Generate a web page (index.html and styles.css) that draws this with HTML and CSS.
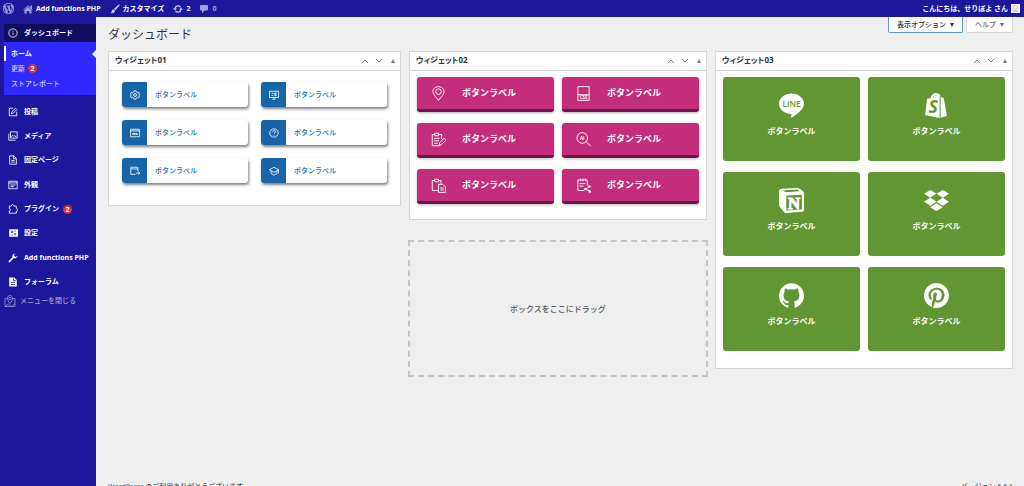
FILE: index.html
```html
<!DOCTYPE html>
<html lang="ja">
<head>
<meta charset="utf-8">
<title>ダッシュボード</title>
<link rel="stylesheet" href="styles.css">
</head>
<body>
<header class="topbar">
  <nav class="topbar-group">
    <a href="#" class="top-link" aria-label="WordPress"><svg class="ico ico-wp" viewBox="0 0 24 24"><path fill="currentColor" stroke="currentColor" stroke-width=".8" d="M21.469 6.825c.84 1.537 1.318 3.3 1.318 5.175 0 3.979-2.156 7.456-5.363 9.325l3.295-9.527c.615-1.54.82-2.771.82-3.864 0-.405-.026-.78-.07-1.11m-7.981.105c.647-.03 1.232-.105 1.232-.105.582-.075.514-.93-.067-.899 0 0-1.755.135-2.88.135-1.064 0-2.85-.15-2.85-.15-.585-.03-.661.855-.075.885 0 0 .54.061 1.125.09l1.68 4.605-2.37 7.08L5.354 6.9c.649-.03 1.234-.1 1.234-.1.585-.075.516-.93-.065-.896 0 0-1.746.138-2.874.138-.2 0-.438-.008-.69-.015C4.911 3.15 8.235 1.215 12 1.215c2.809 0 5.365 1.072 7.286 2.833-.046-.003-.091-.009-.141-.009-1.06 0-1.812.923-1.812 1.914 0 .89.513 1.643 1.06 2.531.411.72.89 1.643.89 2.977 0 .915-.354 1.994-.821 3.479l-1.075 3.585-3.9-11.61.001.014zM12 22.784c-1.059 0-2.081-.153-3.048-.437l3.237-9.406 3.315 9.087c.024.053.05.101.078.149-1.12.393-2.325.609-3.582.609M1.211 12c0-1.564.336-3.05.935-4.39L7.29 21.709C3.694 19.96 1.212 16.271 1.211 12M12 0C5.385 0 0 5.385 0 12s5.385 12 12 12 12-5.385 12-12S18.615 0 12 0"/></svg></a>
    <a href="#" class="top-link"><svg class="ico ico-dim" viewBox="0 0 20 20"><path fill="currentColor" d="M15 7V3h3v7l1.500 1.400-1 1.100L10 4.500l-8.500 8-1-1.100L10 2.300zM10 6l7 6.500V19h-4.500v-5h-5v5H3v-6.500z"/></svg><span>Add functions PHP</span></a>
    <a href="#" class="top-link"><svg class="ico" viewBox="0 0 20 20"><path fill="currentColor" d="M18.800 1c.8.800.3 1.700-.2 2.400L11 12.500 8 9.700l8.300-7.800c.8-.8 1.700-1.500 2.500-.9zM7 10.500l3 2.800c.2 3-3.500 6.200-9 5.200 2-1 2-2.500 2.500-4.500.5-2 2-3.300 3.500-3.500z"/></svg><span>カスタマイズ</span></a>
    <a href="#" class="top-link top-updates"><svg class="ico" viewBox="0 0 20 20"><path fill="none" stroke="currentColor" stroke-width="2.600" d="M4 9a6.200 6.200 0 0 1 11-3M16 11a6.200 6.200 0 0 1-11 3"/><path fill="currentColor" d="M0 8.500h8l-4 4.700zM12 11.500h8l-4-4.700z"/></svg><span>2</span></a>
    <a href="#" class="top-link top-comments"><svg class="ico" viewBox="0 0 20 20"><path fill="currentColor" d="M4 2h12q2 0 2 2v7q0 2-2 2h-5l-5 6v-6H4q-2 0-2-2V4q0-2 2-2z"/></svg><span>0</span></a>
  </nav>
  <a href="#" class="top-link">こんにちは、せりぽよ さん<svg class="avatar" viewBox="0 0 9 9"><path fill="#f3f1ef" d="M0 0h9v9H0z"/><circle cx="4.500" cy="3.500" r="1.800" fill="#fff" stroke="#aaa" stroke-width=".6"/><path d="M2 7.500q2.500-2 5 0" fill="none" stroke="#999" stroke-width=".7"/></svg></a>
</header>
<div class="shell">
  <aside class="sidebar">
    <nav>
      <a href="#" class="item item-current"><svg class="ico" viewBox="0 0 24 24"><g class="line"><circle cx="12" cy="12" r="10"/><path d="M12 11v6M12 6.500v2.500"/></g></svg>ダッシュボード</a>
      <div class="submenu">
        <a href="#" class="sub sub-current">ホーム</a>
        <a href="#" class="sub">更新<span class="badge">2</span></a>
        <a href="#" class="sub">ストアレポート</a>
      </div>
      <div class="group">
        <a href="#" class="item"><svg class="ico" viewBox="0 0 24 24"><path class="line" d="M13 3H3v18h18V11M8 16l1-4.500L18 3l3 3-8.500 9z"/></svg>投稿</a>
        <a href="#" class="item"><svg class="ico" viewBox="0 0 24 24"><path class="line" d="M6 2h16v15H6zM2 6v16h16M8 14l3-4 3 3 2-2 4 4"/></svg>メディア</a>
        <a href="#" class="item"><svg class="ico" viewBox="0 0 24 24"><path class="line" d="M4 2h10l6 6v14H4zM13 2v7h7M8 13h8M8 17h8"/></svg>固定ページ</a>
      </div>
      <div class="group">
        <a href="#" class="item"><svg class="ico" viewBox="0 0 24 24"><path class="line" d="M2 3h20v18H2zM2 7h20M6 12h12M6 16h8"/></svg>外観</a>
        <a href="#" class="item"><svg class="ico" viewBox="0 0 24 24"><path class="line" d="M3 5h5c0-5 6-5 6 0h6v6c5 0 5 6 0 6v5H3v-5c4 0 4-6 0-6z"/></svg>プラグイン<span class="badge">2</span></a>
        <a href="#" class="item"><svg class="ico" viewBox="0 0 24 24"><path fill="currentColor" d="M3 3h21v18H3z"/><path stroke="#1d189b" stroke-width="2" d="M10 6v5M7 10h6M10 15v3M17 6v3M14 14h6M17 14v4"/></svg>設定</a>
      </div>
      <div class="group">
        <a href="#" class="item"><svg class="ico" viewBox="0 0 20 20"><path fill="currentColor" d="M16.700 9.300c-1.500 1.500-3.600 1.600-5.200.9L4.500 18c-2 2.200-4.700-.5-2.700-2.600l7.300-7c-1-3 .4-6.400 4.500-7.200L12 5l3 3 4-1.800c.2 1-1 2-2.300 3.100z"/></svg>Add functions PHP</a>
        <a href="#" class="item"><svg class="ico" viewBox="0 0 24 24"><path fill="currentColor" d="M3 1h12l6 6v16H3z"/><path stroke="#1d189b" stroke-width="2" fill="none" d="M13 3v6h6M7 13h10M7 18h10"/></svg>フォーラム</a>
      </div>
      <button type="button" class="collapse"><svg class="ico-map" viewBox="0 0 24 24"><path class="thin" d="M7 7H2v16h20V7h-5M2 23l7-5 6 5 7-6M12 17C4 8 7 1 12 1s8 7 0 16z"/><circle class="thin" cx="12" cy="7" r="2.500"/></svg>メニューを閉じる</button>
    </nav>
  </aside>
  <main class="main">
    <div class="head">
      <h1>ダッシュボード</h1>
      <div class="tabs">
        <button type="button" class="tab tab-focus">表示オプション<i class="tri-down"></i></button>
        <button type="button" class="tab">ヘルプ<i class="tri-down"></i></button>
      </div>
    </div>
    <div class="columns">
      <section class="card">
        <div class="card-head"><h2>ウィジェット01</h2><div class="handles"><button type="button" aria-label="上へ"><svg viewBox="0 0 14 14"><path d="M4 9l3-3 3 3"/></svg></button><button type="button" aria-label="下へ"><svg viewBox="0 0 14 14"><path d="M4 5l3 3 3-3"/></svg></button><button type="button" aria-label="切り替え"><i class="tri-up"></i></button></div></div>
        <div class="grid grid-blue">
          <a href="#" class="blue"><span class="blue-ico"><svg viewBox="0 0 24 24"><path class="line" d="M9.500 2h5l.8 3 2.700 1.500 3-.8 2 4L21 12l2 2.300-2 4-3-.8-2.700 1.500-.8 3h-5l-.8-3L6 17.500l-3 .8-2-4L3 12 1 9.700l2-4 3 .8L8.700 5z"/><circle class="line" cx="12" cy="12" r="3.500"/></svg></span><span>ボタンラベル</span></a>
          <a href="#" class="blue"><span class="blue-ico"><svg viewBox="0 0 24 24"><path class="line" d="M1 3h22v15H1zM8 22h8M12 18v4M6 8h5M6 13h4M18 8h-4v5h4M16 6v9"/></svg></span><span>ボタンラベル</span></a>
          <a href="#" class="blue"><span class="blue-ico"><svg viewBox="0 0 24 24"><path class="line" d="M1 3h22v18H1zM1 7h22M7 12v5M11 12v5M14 17l2-4 2 4M6 14h12"/></svg></span><span>ボタンラベル</span></a>
          <a href="#" class="blue"><span class="blue-ico"><svg viewBox="0 0 24 24"><circle class="line" cx="12" cy="12" r="10"/><path class="line" d="M8.500 10c0-5 7-5 7-1 0 3-3.500 2.500-3.500 5.500M12 16.500v2"/></svg></span><span>ボタンラベル</span></a>
          <a href="#" class="blue"><span class="blue-ico"><svg viewBox="0 0 24 24"><path class="line" d="M13 20H2V3h17v9M2 7h17M14 17h9M20 13l3.500 4-3.500 4"/></svg></span><span>ボタンラベル</span></a>
          <a href="#" class="blue"><span class="blue-ico"><svg viewBox="0 0 24 24"><path class="line" d="M1 9l11-6 11 6-11 6zM5 12v6l7 4 7-4v-6M23 9v9"/></svg></span><span>ボタンラベル</span></a>
        </div>
      </section>
      <div class="stack">
        <section class="card">
          <div class="card-head"><h2>ウィジェット02</h2><div class="handles"><button type="button" aria-label="上へ"><svg viewBox="0 0 14 14"><path d="M4 9l3-3 3 3"/></svg></button><button type="button" aria-label="下へ"><svg viewBox="0 0 14 14"><path d="M4 5l3 3 3-3"/></svg></button><button type="button" aria-label="切り替え"><i class="tri-up"></i></button></div></div>
          <div class="grid grid-pink">
            <a href="#" class="pink"><svg viewBox="0 0 24 24"><path class="thin" d="M12 23C8 18 3 13 3 9a9 8 0 0 1 18 0c0 4-5 9-9 14z"/><circle class="thin" cx="12" cy="9" r="4.500"/></svg>ボタンラベル</a>
            <a href="#" class="pink"><svg viewBox="0 0 24 24"><path class="thin" d="M3 1h18v22H3zM3 14h18"/><text x="12" y="21.500" class="t-css">CSS</text></svg>ボタンラベル</a>
            <a href="#" class="pink"><svg viewBox="0 0 24 24"><path class="thin" d="M6 4H2v18h13M12 4h5v7M6 2h6v4H6zM5 10h9M5 14h8M5 18h6M13 21l1-4 7-7 3 3-7 7z"/></svg>ボタンラベル</a>
            <a href="#" class="pink"><svg viewBox="0 0 24 24"><circle class="thin" cx="10" cy="9.500" r="8.500"/><path class="thin" d="M16 15.500l8 7.500"/><text x="10" y="12.500" class="t-ai">AI</text></svg>ボタンラベル</a>
            <a href="#" class="pink"><svg viewBox="0 0 24 24"><path class="thin" d="M6 4H2v16h10M12 4h4v5M6 2h6v4H6zM12 10h7l4 4v9H12zM15 16h5M15 19h5"/></svg>ボタンラベル</a>
            <a href="#" class="pink"><svg viewBox="0 0 24 24"><path class="thin" d="M13 20H3V3h15v9M7 1v4M11 1v4M15 1v4M6 9h9M6 13h6M21 14l-6 4 7 3"/><circle cx="21.500" cy="13.500" r="2" fill="currentColor"/><circle cx="15" cy="17.500" r="2" fill="currentColor"/><circle cx="22" cy="21.500" r="2" fill="currentColor"/></svg>ボタンラベル</a>
          </div>
        </section>
        <div class="drop">ボックスをここにドラッグ</div>
      </div>
      <section class="card">
        <div class="card-head"><h2>ウィジェット03</h2><div class="handles"><button type="button" aria-label="上へ"><svg viewBox="0 0 14 14"><path d="M4 9l3-3 3 3"/></svg></button><button type="button" aria-label="下へ"><svg viewBox="0 0 14 14"><path d="M4 5l3 3 3-3"/></svg></button><button type="button" aria-label="切り替え"><i class="tri-up"></i></button></div></div>
        <div class="grid grid-green">
          <a href="#" class="green"><svg viewBox="0 0 24 24"><path fill="currentColor" d="M12 .500c6.600 0 12 4.400 12 9.700 0 4.700-4.500 8.300-11.500 13.300-.6.300-1-.1-.8-.8l.3-2.600C5.400 20.100 0 15.600 0 10.200S5.400.500 12 .500z"/><text x="12" y="13" class="t-line">LINE</text></svg>ボタンラベル</a>
          <a href="#" class="green"><svg viewBox="0 0 24 24"><path fill="currentColor" d="M3 5.500L15 3.500V24L1 21zM16 3.500l3 1.500 3 17-6 1.700z"/><path class="line" d="M7 5.500C8 1.500 11 0 12 1.500s1 3 1 3.500M10 5c1-4 4-5 5-1.500"/><text x="8.800" y="19" class="t-s">S</text></svg>ボタンラベル</a>
          <a href="#" class="green"><svg viewBox="0 0 24 24"><path fill="currentColor" d="M2 .800L17.500 0Q19 0 20 .700l3 2.300q1 .7 1 1.700v16.500q0 1.500-1.700 1.700L7 24q-1.500.1-2.300-1l-4-5Q0 17 0 16V3Q0 1 2 .800z"/><path fill="#629632" d="M3.500 2.300l14-.8 2.200 1.700L6.500 4zM7 7.300L22 6.400v14.200L7 21.500z"/><text x="14.500" y="19.700" class="t-n">N</text></svg>ボタンラベル</a>
          <a href="#" class="green"><svg viewBox="0 0 24 24"><path fill="currentColor" d="M6 1.807L0 5.629l6 3.822 6.001-3.822L6 1.807zM18 1.807l-6 3.822 6 3.822 6-3.822-6-3.822zM0 13.274l6 3.822 6.001-3.822L6 9.452l-6 3.822zM18 9.452l-6 3.822 6 3.822 6-3.822-6-3.822zM6 18.371l6.001 3.822 6-3.822-6-3.822L6 18.371z"/></svg>ボタンラベル</a>
          <a href="#" class="green"><svg viewBox="0 0 24 24"><path fill="currentColor" d="M12 .297c-6.630 0-12 5.373-12 12 0 5.303 3.438 9.800 8.205 11.385.6.113.82-.258.82-.577 0-.285-.01-1.040-.015-2.040-3.338.724-4.042-1.610-4.042-1.610C4.422 18.070 3.633 17.700 3.633 17.700c-1.087-.744.084-.729.084-.729 1.205.084 1.838 1.236 1.838 1.236 1.070 1.835 2.809 1.305 3.495.998.108-.776.417-1.305.76-1.605-2.665-.3-5.466-1.332-5.466-5.930 0-1.310.465-2.380 1.235-3.220-.135-.303-.54-1.523.105-3.176 0 0 1.005-.322 3.300 1.230.96-.267 1.980-.399 3-.405 1.020.006 2.040.138 3 .405 2.280-1.552 3.285-1.230 3.285-1.230.645 1.653.24 2.873.12 3.176.765.84 1.230 1.910 1.230 3.220 0 4.610-2.805 5.625-5.475 5.920.42.36.81 1.096.81 2.220 0 1.606-.015 2.896-.015 3.286 0 .315.21.69.825.57C20.565 22.092 24 17.592 24 12.297c0-6.627-5.373-12-12-12"/></svg>ボタンラベル</a>
          <a href="#" class="green"><svg viewBox="0 0 24 24"><path fill="currentColor" d="M12.017 0C5.396 0 .029 5.367.029 11.987c0 5.079 3.158 9.417 7.618 11.162-.105-.949-.199-2.403.041-3.439.219-.937 1.406-5.957 1.406-5.957s-.359-.72-.359-1.781c0-1.663.967-2.911 2.168-2.911 1.024 0 1.518.769 1.518 1.688 0 1.029-.653 2.567-.992 3.992-.285 1.193.6 2.165 1.775 2.165 2.128 0 3.768-2.245 3.768-5.487 0-2.861-2.063-4.869-5.008-4.869-3.410 0-5.409 2.562-5.409 5.199 0 1.033.394 2.143.889 2.741.099.12.112.225.085.345-.09.375-.293 1.199-.334 1.363-.053.225-.172.271-.401.165-1.495-.69-2.433-2.878-2.433-4.646 0-3.776 2.748-7.252 7.920-7.252 4.158 0 7.392 2.967 7.392 6.923 0 4.135-2.607 7.462-6.233 7.462-1.214 0-2.354-.629-2.758-1.379l-.749 2.848c-.269 1.045-1.004 2.352-1.498 3.146 1.123.345 2.306.535 3.550.535 6.607 0 11.985-5.365 11.985-11.987C23.970 5.390 18.592.026 11.985.026z"/></svg>ボタンラベル</a>
        </div>
      </section>
    </div>
    <footer class="foot"><span><a href="#">WordPress</a> のご利用ありがとうございます。</span><span>バージョン 6.6.1</span></footer>
  </main>
</div>
</body>
</html>
```
FILE: styles.css
```css
* { box-sizing: border-box; }
body {
  margin: 0;
  height: 100vh;
  overflow: hidden;
  background: #efefef;
  color: #2c3338;
  font: 500 7px/12px "Open Sans", "Noto Sans CJK JP", sans-serif;
}
a { color: inherit; text-decoration: none; }
button { font: inherit; color: inherit; border: 0; background: none; padding: 0; }
h1, h2 { margin: 0; }
svg { display: block; flex: none; }
.line { fill: none; stroke: currentColor; stroke-width: 2; stroke-linejoin: round; }
.thin { fill: none; stroke: currentColor; stroke-width: 1.5; stroke-linejoin: round; }
.ico { width: 10px; height: 10px; }

.topbar {
  display: flex;
  justify-content: space-between;
  height: 17px;
  padding: 0 4px 0 3px;
  background: #1d189b;
  color: #fff;
  font-weight: 700;
}
.topbar-group { display: flex; gap: 9px; }
.top-link { display: flex; align-items: center; gap: 3px; }
.topbar .ico { color: #c9c8ee; }
.topbar .ico-wp { width: 11px; height: 11px; color: #a3a1dc; }
.topbar .ico-dim, .top-comments { color: #a3a1dc; }
.top-comments .ico { color: #a3a1dc; }
.avatar { width: 9px; height: 9px; }

.shell { display: flex; }
.sidebar {
  flex: none;
  width: 96px;
  min-height: calc(100vh - 17px);
  padding: 7px 0 0 4px;
  background: #1d189b;
  color: #fff;
}
.item {
  display: flex;
  align-items: center;
  gap: 6px;
  height: 24px;
  padding-left: 4px;
  font-weight: 700;
  white-space: nowrap;
}
.item-current { height: 18px; background: #100d5e; }
.submenu { padding: 4px 0; margin-bottom: 5px; background: #3029ff; }
.sub {
  display: flex;
  align-items: center;
  height: 15px;
  padding-left: 7px;
  color: #d2d0ff;
}
.sub-current {
  justify-content: space-between;
  padding-left: 5px;
  border-left: 2px solid #fff;
  color: #fff;
  font-weight: 700;
}
.sub-current::after {
  content: "";
  border: 4px solid transparent;
  border-left: 0;
  border-right-color: #efefef;
}
.badge {
  width: 9px;
  height: 9px;
  margin-left: 3px;
  border-radius: 50%;
  background: #d63638;
  color: #fff;
  font-weight: 700;
  line-height: 9px;
  text-align: center;
}
.item .badge { margin-left: -2px; }
.group { margin-bottom: 1px; }
.collapse { display: flex; align-items: center; gap: 4px; height: 12px; color: #a09ed8; }
.ico-map { width: 12px; height: 12px; }

.main {
  flex: 1;
  display: flex;
  flex-direction: column;
  min-width: 0;
  min-height: calc(100vh - 9px);
  padding: 0 11px 0 12px;
}
.head { display: flex; justify-content: space-between; height: 34px; }
.head h1 { padding-top: 10px; font-size: 12px; line-height: 16px; font-weight: 400; }
.tabs { display: flex; align-items: flex-start; gap: 3px; }
.tab {
  display: flex;
  align-items: center;
  gap: 4px;
  height: 16px;
  padding: 0 8px;
  border: 1px solid #d5d6d8;
  border-top: 0;
  border-radius: 0 0 2px 2px;
  background: #fff;
  color: #646970;
}
.tab-focus { border-color: #5a9bc0; color: #2c3338; }
.tri-down { border: 2px solid transparent; border-top: 4px solid currentColor; border-bottom: 0; }
.tri-up { border: 2px solid transparent; border-bottom: 4px solid currentColor; border-top: 0; }

.columns {
  display: grid;
  grid-template-columns: 293fr 298fr 298fr;
  align-items: start;
  gap: 8px;
}
.stack { display: flex; flex-direction: column; gap: 20px; }
.card { border: 1px solid #d5d6d8; background: #fff; }
.card-head {
  display: flex;
  justify-content: space-between;
  height: 19px;
  padding-left: 6px;
  border-bottom: 1px solid #d5d6d8;
}
.card-head h2 { font-size: 8px; line-height: 16px; font-weight: 700; font-feature-settings: "palt"; }
.handles { display: flex; color: #787c82; }
.handles button { display: grid; place-items: center; width: 14px; }
.handles svg { width: 14px; height: 14px; fill: none; stroke: currentColor; stroke-width: 1; }
.grid { display: grid; grid-template-columns: 1fr 1fr; }

.grid-blue { gap: 13px; padding: 11px 13px 22px; }
.blue {
  display: flex;
  align-items: center;
  gap: 8px;
  height: 25px;
  overflow: hidden;
  border-radius: 3px;
  background: #fff;
  box-shadow: 1px 2px 3px rgba(0, 0, 0, .5);
  color: #2271a8;
}
.blue-ico { display: grid; place-items: center; width: 25px; height: 25px; background: #1764a8; color: #fff; }
.blue-ico svg { width: 10px; height: 10px; }

.grid-pink { gap: 11px 8px; padding: 6px 7px 15px; }
.pink {
  display: flex;
  align-items: center;
  gap: 16px;
  height: 35px;
  padding-left: 14px;
  border-bottom: 3px solid #6b1745;
  border-radius: 3px;
  background: #c42c7c;
  box-shadow: 0 1px 3px rgba(0, 0, 0, .3);
  color: #fff;
  font-size: 9px;
  font-weight: 700;
}
.pink svg { width: 15px; height: 15px; }

.grid-green { gap: 11px 8px; padding: 6px 7px 17px; }
.green {
  display: flex;
  flex-direction: column;
  align-items: center;
  gap: 7px;
  height: 84px;
  padding-top: 16px;
  border-radius: 3px;
  background: #629632;
  color: #fff;
  font-size: 8px;
  font-weight: 700;
}
.green svg { width: 25px; height: 25px; }
.green text, .pink text { text-anchor: middle; font-weight: 700; }
.green .t-line { fill: #629632; font-size: 8px; font-weight: 600; }
.t-s { fill: #629632; font-size: 17px; font-style: italic; }
.t-n { fill: #fff; stroke: #fff; stroke-width: 1; font-family: "Liberation Serif", serif; font-size: 16px; }
.t-css { fill: currentColor; font-size: 7px; }
.t-ai { fill: currentColor; font-size: 7px; }

.drop {
  display: grid;
  place-items: center;
  height: 137px;
  margin: 0 -1px;
  border: 2px dashed #c3c4c7;
  color: #50575e;
  font-size: 8px;
}
.foot { display: flex; justify-content: space-between; margin-top: auto; padding-bottom: 1px; color: #50575e; }
.foot a { color: #2271b1; }
```
